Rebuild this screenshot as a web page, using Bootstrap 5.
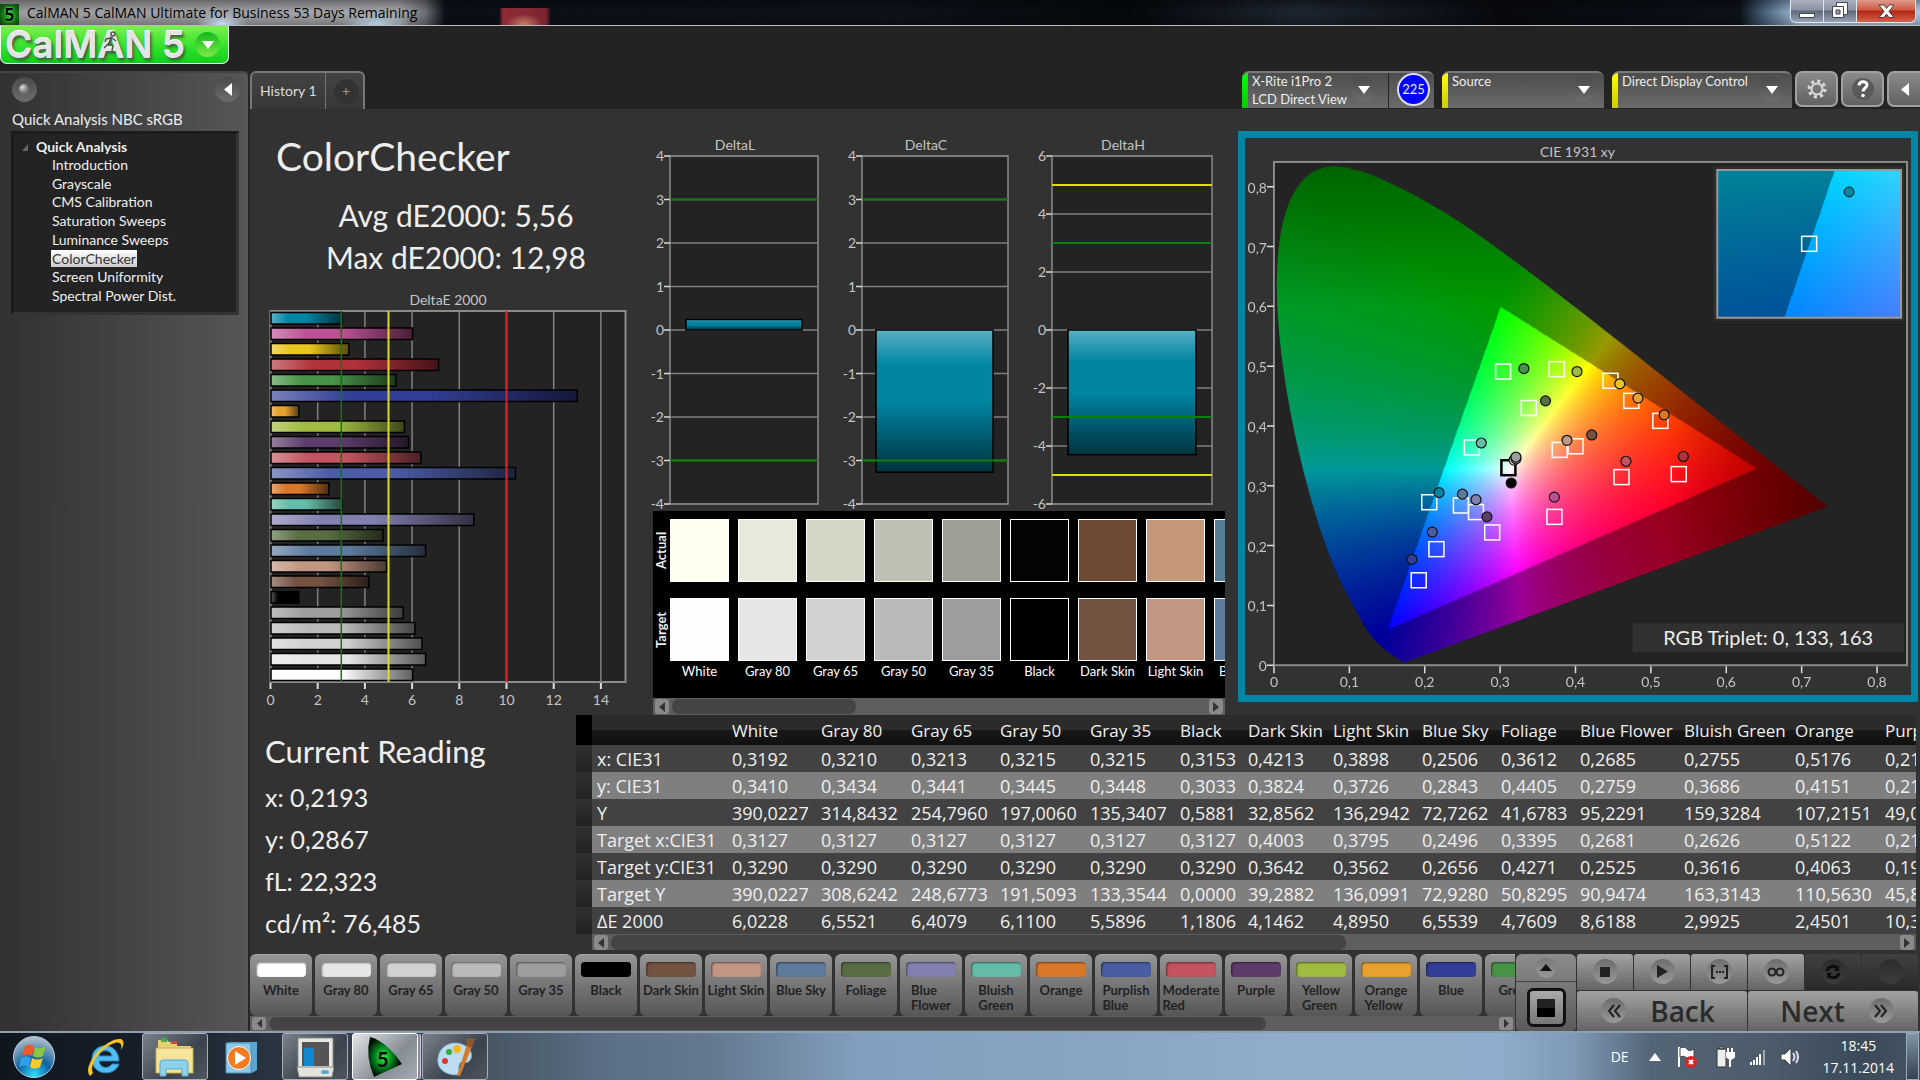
<!DOCTYPE html>
<html lang="en">
<head>
<meta charset="utf-8">
<meta name="viewport" content="width=device-width, initial-scale=1">
<title>CalMAN 5 CalMAN Ultimate for Business</title>
<link href="https://cdn.jsdelivr.net/npm/bootstrap@5.3.0/dist/css/bootstrap.min.css" rel="stylesheet">
<style>
:root{--ui:Lato,"Open Sans",sans-serif;--grid:"Open Sans","Noto Sans",sans-serif;--teal:#0085a3}
body{font-family:var(--ui);font-size:13px;color:#eee;background:#232323;line-height:18px}
button{font-family:inherit;border:0;padding:0;color:inherit}
svg{display:block}
svg text{font-family:var(--ui);font-size:14px;fill:#c4c4c4}

.titlebar{height:26px;border-bottom:1px solid #b9bcc2;background:
 radial-gradient(ellipse 26px 12px at 222px 24px,#c5dcf0 0,transparent 100%),
 radial-gradient(ellipse 34px 12px at 376px 24px,#b4cfe0 0,transparent 100%),
 radial-gradient(ellipse 18px 10px at 524px 24px,#c08060 0,transparent 100%),
 linear-gradient(90deg,transparent 499px,#8f2b38 503px,#7a2531 546px,transparent 551px) 0 8px/100% 18px no-repeat,
 linear-gradient(rgba(0,0,0,.35),transparent 45%,transparent 55%,rgba(0,0,0,.25)),
 linear-gradient(90deg,#9c9c9e 0,#a3a4a8 400px,#6c6f74 425px,#0b0f16 445px,#0d1219 900px,#05080c 1130px,#1c2530 1300px,#07090e 1500px,#0c1219 1740px,#49627c 1765px,#a9c4e0 1800px)}
.win-title{font-family:var(--grid);font-size:14px;color:#000}
.app-mark{width:19px;height:21px;background:radial-gradient(#1fae1f,#0b3d0b);color:#000;text-shadow:0 0 2px #5f5,0 0 2px #5f5;font-family:var(--grid);font-weight:700;font-size:18px;line-height:21px}
.win-ctl{height:23px;border:1px solid #dfe6ee;border-top:0;border-radius:0 0 6px 6px;overflow:hidden}
.win-ctl button{width:33px;background:linear-gradient(#a9b1bd 0,#8b95a3 45%,#5d6878 50%,#98a5b5 100%);border-right:1px solid #dfe6ee}
.win-ctl button:last-child{width:58px;border:0;background:linear-gradient(#e09a8c 0,#cf5a43 45%,#b02713 50%,#d4604a 100%)}

.brandbar{height:45px}
.brand-btn{width:229px;height:38px;background:linear-gradient(#7cf04c,#2fe02a 60%,#0fd01c);border:1px solid #e8ffe8;border-top:0;border-radius:0 0 7px 7px}
.brand-name{font-family:Inter,sans-serif;font-weight:600;font-size:37px;line-height:34px;color:#e4e4e4;text-shadow:0 -1px 0 #fff,1px 1px 1px #555,2px 3px 3px #2a7a2a}
.runner{left:101px;top:3px}
.round-btn{width:25px;height:25px;border-radius:50%;background:linear-gradient(#4a4a4a,#6d6d6d);display:flex;align-items:center;justify-content:center;flex:none}
.brand-btn .round-btn{background:linear-gradient(#12b81a,#7bea4b)}
.tab-group .round-btn{background:#333;color:#999}

.side{width:250px;flex:none;background:linear-gradient(90deg,#313131,#565656);border-top:2px solid #444;border-right:2px solid #262626;border-radius:0 6px 0 0}
.side-title{font-size:15px}
.tree{border:3px solid #1c1c1c;border-right-color:#333;border-bottom-color:#333;background:#232323;height:184px;font-size:14px;margin:3px 9px 0 11px}
.tree ul{height:149px;padding-left:29px}
.tree a{color:#f0f0f0;text-decoration:none;padding:0 1px}
.tree a.current{background:linear-gradient(#fff,#ccc);color:#333}

.tabrow{height:38px}
.tab-group{border:2px solid #777;border-bottom:0;border-radius:6px 6px 0 0;background:linear-gradient(#444,#363636)}
.tab-group button{background:none;font-size:14px;color:#ddd}
.device{border-top:2px solid #7a7a7a;border-radius:7px 7px 0 0;background:linear-gradient(#4d4d4d,#6b6b6b);overflow:hidden;margin-bottom:1px}
.device button{background:none;text-align:left}
.device-text{line-height:18px;margin-top:-1px}
.stripe{width:6px;flex:none;align-self:stretch}
.count{width:33px;height:33px;border-radius:50%;background:#00f;border:2px solid #dde;font-size:13px;line-height:29px;text-align:center}
.tool-btn{width:43px;height:36px;border:2px solid #a0a0a0;border-radius:7px;background:linear-gradient(#8a8a8a,#626262);display:flex;align-items:center;justify-content:center;flex:none;margin-left:3px}

.work{background:#323232;min-height:0}
.c-left{flex:396 1 0;min-width:0}.c-mid{flex:586 1 0;min-width:0}.c-right{flex:688 1 0;min-width:0}
.h-page{font-size:39px;line-height:56px;font-weight:400;margin:19px 0 0 26px}
.stats{margin:10px 0 12px 16px}
.stat{font-size:30px;line-height:42px}
.reads{padding:13px 0 0 15px;width:322px;flex:none}
.h-read{font-size:31px;line-height:46px;font-weight:400;margin-bottom:2px}
.reading{font-size:25px;line-height:42px}
.charts{padding-top:21px}
.cie{border:7px solid var(--teal);margin:22px 2px 0 6px}
.cie .triplet{font-size:20px;fill:#eee}

.patches{background:#000;height:204px;margin:0 7px}
.patch-row{overflow:hidden}
.vtext{writing-mode:vertical-rl;transform:rotate(180deg);text-align:center;font-weight:700;line-height:17px}
.patch{width:59px;height:63px;border:1px solid #fff;flex:none}
.patch-col{width:59px;flex:none}
.patch-name{font-size:13px;line-height:20px;color:#fff;white-space:nowrap}

.hbar{height:17px;background:#5e5e5e;padding:1px 2px}
.hbar button{width:14px;height:15px;border-radius:3px;background:#8a8a8a;display:flex;align-items:center;justify-content:center;flex:none}
.hbar .thumb{background:#444;border-radius:7px;height:15px;margin-left:3px}

.datagrid{font-family:var(--grid);font-size:18px;line-height:26px;table-layout:fixed;width:1344px;white-space:nowrap;color:#f0f0f0}
.datagrid th,.datagrid td{font-weight:400;padding:0;height:27px;overflow:hidden}
.datagrid thead th{height:30px;padding-top:2px;font-size:17px;background:linear-gradient(#2b2b2b 50%,#181818 51%,#101010)}
.datagrid tbody tr{background:#424242}
.datagrid tbody tr:nth-child(even){background:#7f7f7f}
.datagrid .gut{background:linear-gradient(#303030,#222)}
.datagrid thead .gut{background:#000}
.datagrid .rowname{padding-left:5px}

.deck{background:#323232}
.chips{height:62px;gap:3px;overflow:hidden}
.chip{width:62px;flex:none;border-radius:6px;background:linear-gradient(#959595,#565656);border-top:1px solid #a8a8a8;color:#222;font-weight:700;line-height:15px;display:flex;flex-direction:column;align-items:center}
.chip i{width:50px;height:15px;margin:7px 0 6px;border-radius:4px;box-shadow:inset 1px 1px 2px rgba(0,0,0,.5);flex:none}
.chip span{text-align:left}
.trans{width:341px;flex:none;margin-right:2px}
.trans button{background:linear-gradient(#a2a2a2,#646464);border-radius:3px 3px 0 0;display:flex;align-items:center;justify-content:center;flex:1 1 0;color:#2b2b2b}
.trans button.off{background:linear-gradient(#404040,#2a2a2a);color:#111}
.trans .round-btn{background:linear-gradient(#6d6d6d,#999)}
.trans .off .round-btn{background:linear-gradient(#2c2c2c,#3c3c3c)}
.nav-word{font-family:var(--grid);font-size:28px;font-weight:600;line-height:30px}
.mon{width:60px;flex:none;background:linear-gradient(#8c8c8c,#5a5a5a);border-radius:6px 6px 4px 4px;margin-left:1px;margin-right:1px}
.mon .top-half{height:28px;border-bottom:1px solid #444;background:none}
.mon .round-btn{width:20px;height:20px;background:linear-gradient(#777,#999)}
.mon .screen-btn{width:39px;height:39px;border:3px solid #111;border-radius:6px;background:linear-gradient(#aaa,#777);margin-top:6px}

.taskbar{height:49px;border-top:2px solid #8fa0b2;font-family:var(--grid);background:
 linear-gradient(90deg,#0f161e 0,#17202a 8%,#2c3744 15%,#46545f 25%,#5c7088 32%,#64798f 37%,#839fc0 45%,#86a3c0 55%,#91adcb 68%,#8fadcc 78%,#7f99b6 82%,#546577 86%,#4d5c6b 92%,#3b4a58 97%,#435363 100%)}
.task{width:66px;height:47px;background:none;display:flex;align-items:center;justify-content:center;flex:none}
.task.start{width:68px}
.task.open{border:1px solid #aab;border-radius:3px;background:linear-gradient(135deg,#7a828a,#3b444e 60%,#4d565f)}
.task.active{border:1px solid #fff;border-radius:3px;background:linear-gradient(135deg,#e3e5e8,#878d95 60%,#a6acb3);box-shadow:3px 0 0 -1px #889,4px 0 0 -1px #ccd}
.clock{font-size:14px;line-height:22px;text-align:center;color:#fff}
.tray{gap:12px;margin-right:12px}
.peek{width:13px;border:1px solid #9ab;background:linear-gradient(#8393a2,#33414f);margin-right:1px}
</style>
</head>
<body class="vh-100 d-flex flex-column overflow-hidden">

<header class="titlebar d-flex align-items-start flex-shrink-0">
  <span class="app-mark text-center mt-1">5</span>
  <span class="win-title ms-1 ps-1 mt-1">CalMAN 5 CalMAN Ultimate for Business 53 Days Remaining</span>
  <div class="win-ctl d-flex ms-auto me-1">
    <button aria-label="Minimize"><svg width="32" height="22"><rect x="8.500" y="13.500" width="15" height="4" fill="#fff" stroke="#445"/></svg></button>
    <button aria-label="Restore"><svg width="32" height="22"><path d="M12.500 2.500h11v12h-11z" fill="#fff" stroke="#445"/><path d="M8.500 6.500h11v11h-11z" fill="#fff" stroke="#445"/><path d="M12 10h4v4h-4z" fill="#99a" stroke="#445"/></svg></button>
    <button aria-label="Close"><svg width="58" height="22"><path d="M22 5h5l2.500 3.500L32 5h5l-5 6.500 5 6h-5l-2.500-3.500L27 17.500h-5l5-6z" fill="#fff" stroke="#444"/></svg></button>
  </div>
</header>

<div class="brandbar flex-shrink-0">
  <button class="brand-btn position-relative d-flex align-items-center justify-content-between ps-1 pe-2" aria-label="CalMAN 5 menu">
    <span class="brand-name">CalMAN 5</span>
    <svg class="runner position-absolute" width="16" height="24" viewBox="0 0 16 24" fill="none" stroke="#4a5a4a" stroke-width="1.500"><circle cx="11" cy="5" r="2"/><path d="M10 8l-3 6 4 3-1 5M7 14l-5 5M9 9l-5 1-1 3M10 9l4 3"/></svg>
    <span class="round-btn"><svg width="12" height="8"><path d="M0 0h12L6 8z" fill="#fff"/></svg></span>
  </button>
</div>

<div class="d-flex flex-grow-1 overflow-hidden">
  <aside class="side">
    <div class="d-flex justify-content-between ps-2 pe-2 pt-1 ms-1">
      <button class="round-btn" aria-label="Record"><svg width="13" height="13"><defs><radialGradient id="ball" cx=".35" cy=".35"><stop offset="0" stop-color="#ddd"/><stop offset="1" stop-color="#777"/></radialGradient></defs><circle cx="6" cy="6" r="5" fill="url(#ball)"/></svg></button>
      <button class="round-btn" aria-label="Collapse"><svg width="8" height="13"><path d="M8 0v13L0 6.500z" fill="#fff"/></svg></button>
    </div>
    <div class="side-title ms-2 ps-1 mt-2">Quick Analysis NBC sRGB</div>
    <nav class="tree ps-2">
      <div class="d-flex align-items-center pt-1 fw-bold"><svg width="6" height="7" class="me-2"><path d="M6 0v7H0z" fill="#666"/></svg>Quick Analysis</div>
      <ul class="list-unstyled mb-0 d-flex flex-column justify-content-between">
        <li><a href="#">Introduction</a></li><li><a href="#">Grayscale</a></li><li><a href="#">CMS Calibration</a></li><li><a href="#">Saturation Sweeps</a></li><li><a href="#">Luminance Sweeps</a></li><li><a href="#" class="current">ColorChecker</a></li><li><a href="#">Screen Uniformity</a></li><li><a href="#">Spectral Power Dist.</a></li>
      </ul>
    </nav>
  </aside>

  <main class="flex-grow-1 d-flex flex-column overflow-hidden">
    <div class="tabrow d-flex flex-shrink-0">
      <div class="tab-group d-flex">
        <button class="ps-2 pe-2">History 1</button>
        <button class="border-start border-secondary px-1 ps-2" aria-label="Add history"><span class="round-btn">+</span></button>
      </div>
      <div class="d-flex ms-auto">
        <div class="device d-flex me-2" id="devMeter"></div>
        <div class="device d-flex me-2" id="devSource"></div>
        <div class="device d-flex" id="devDisplay"></div>
        <button class="tool-btn" aria-label="Settings"><svg width="22" height="22" viewBox="-11 -11 22 22"><g fill="none" stroke="#ddd"><circle r="5.500" stroke-width="2"/><circle r="8" stroke-width="3" stroke-dasharray="3 3.280"/></g></svg></button>
        <button class="tool-btn" aria-label="Help"><svg width="22" height="24"><circle cx="11" cy="12" r="11" fill="#5a5a5a"/><path d="M7 8.500c0-5 8-5 8-.5 0 3-4 3-4 6.500" fill="none" stroke="#fff" stroke-width="3"/><circle cx="11" cy="18.500" r="1.800" fill="#fff"/></svg></button>
        <button class="tool-btn border-end-0 rounded-end-0" style="width:33px" aria-label="Collapse toolbar"><svg width="8" height="13"><path d="M8 0v13L0 6.500z" fill="#fff"/></svg></button>
      </div>
    </div>

    <div class="work flex-grow-1 d-flex flex-column overflow-hidden">
      <div class="d-flex">
        <section class="c-left">
          <h1 class="h-page">ColorChecker</h1>
          <div class="stats text-center">
            <div class="stat">Avg dE2000: 5,56</div>
            <div class="stat">Max dE2000: 12,98</div>
          </div>
          <svg id="deChart" viewBox="0 0 396 420" class="w-100"></svg>
        </section>
        <section class="c-mid">
          <div class="charts d-flex" id="deltas"></div>
          <div class="patches d-flex flex-column">
            <div class="patch-row d-flex flex-grow-1 pt-2">
              <div class="d-flex flex-column flex-shrink-0">
                <div class="vtext" style="height:63px">Actual</div>
                <div class="vtext mt-3" style="height:63px">Target</div>
              </div>
              <div class="d-flex" id="patchCols" style="gap:9px"></div>
            </div>
            <div class="hbar d-flex flex-shrink-0"><button aria-label="Left"><svg width="6" height="10"><path d="M6 0v10L0 5z" fill="#333"/></svg></button><div class="thumb" style="width:184px"></div><button class="ms-auto" aria-label="Right"><svg width="6" height="10"><path d="M0 0v10L6 5z" fill="#333"/></svg></button></div>
          </div>
        </section>
        <section class="c-right">
          <div class="cie">
            <svg id="cie" viewBox="0 0 667 558" class="w-100"></svg>
          </div>
        </section>
      </div>

      <div class="d-flex flex-grow-1">
        <section class="reads">
          <h2 class="h-read">Current Reading</h2>
          <div class="reading">x: 0,2193</div>
          <div class="reading">y: 0,2867</div>
          <div class="reading">fL: 22,323</div>
          <div class="reading">cd/m²: 76,485</div>
        </section>
        <section class="flex-grow-1 overflow-hidden me-1 ms-1 ps-0">
          <table class="datagrid" id="grid"></table>
          <div class="hbar d-flex ms-3"><button aria-label="Left"><svg width="6" height="10"><path d="M6 0v10L0 5z" fill="#333"/></svg></button><div class="thumb" style="width:735px"></div><button class="ms-auto" aria-label="Right"><svg width="6" height="10"><path d="M0 0v10L6 5z" fill="#333"/></svg></button></div>
        </section>
      </div>
    </div>

    <footer class="deck d-flex flex-shrink-0 pt-1">
      <div class="flex-grow-1 overflow-hidden">
        <div class="chips d-flex" id="chips"></div>
        <div class="hbar d-flex" style="height:15px"><button style="height:13px" aria-label="Left"><svg width="5" height="9"><path d="M5 0v9L0 4.500z" fill="#333"/></svg></button><div class="thumb" style="width:997px;height:13px"></div><button class="ms-auto" style="height:13px" aria-label="Right"><svg width="5" height="9"><path d="M0 0v9L5 4.500z" fill="#333"/></svg></button></div>
      </div>
      <div class="mon d-flex flex-column align-items-center">
        <button class="top-half w-100 d-flex justify-content-center align-items-center" aria-label="Expand"><span class="round-btn"><svg width="12" height="7"><path d="M0 7h12L6 0z" fill="#111"/></svg></span></button>
        <button class="screen-btn d-flex align-items-center justify-content-center" aria-label="Pattern window"><svg width="18" height="18"><path d="M0 0h18v18H0z"/><path d="M0 0h18v9H0z" fill="#222"/></svg></button>
      </div>
      <div class="trans d-flex flex-column" style="gap:1px">
        <div class="d-flex flex-grow-1" style="gap:1px">
          <button aria-label="Stop"><span class="round-btn"><svg width="10" height="10"><path d="M0 0h10v10H0z" fill="#222"/></svg></span></button>
          <button aria-label="Play"><span class="round-btn"><svg width="11" height="13"><path d="M0 0l11 6.500L0 13z" fill="#222"/></svg></span></button>
          <button aria-label="Range"><span class="round-btn"><svg width="17" height="14" fill="none" stroke="#222" stroke-width="2"><path d="M4 1H1v12h3M13 1h3v12h-3"/><path d="M5 7h8" stroke-dasharray="2 1"/></svg></span></button>
          <button aria-label="Loop"><span class="round-btn"><svg width="18" height="10" fill="none" stroke="#222" stroke-width="2"><circle cx="5" cy="5" r="3.500"/><circle cx="13" cy="5" r="3.500"/></svg></span></button>
          <button class="off" aria-label="Refresh"><span class="round-btn"><svg width="16" height="16" fill="none" stroke="#0c0c0c" stroke-width="3"><path d="M2 7a6 6 0 0 1 10-3M14 9a6 6 0 0 1-10 3"/><path d="M14 1v6H9zM2 15V9h5z" fill="#0c0c0c" stroke="none"/></svg></span></button>
          <button class="off" aria-label="Blank"><span class="round-btn"></span></button>
        </div>
        <div class="d-flex flex-grow-1" style="gap:1px">
          <button><span class="round-btn me-4"><svg width="14" height="14" fill="none" stroke="#222" stroke-width="2"><path d="M7 1L2 7l5 6M13 1L8 7l5 6"/></svg></span><span class="nav-word me-2">Back</span></button>
          <button><span class="nav-word ms-2 me-4">Next</span><span class="round-btn"><svg width="14" height="14" fill="none" stroke="#222" stroke-width="2"><path d="M1 1l5 6-5 6M7 1l5 6-5 6"/></svg></span></button>
        </div>
      </div>
    </footer>
  </main>
</div>

<div class="taskbar d-flex align-items-center flex-shrink-0">
  <button class="task start" aria-label="Start"><svg width="44" height="44" viewBox="0 0 44 44"><defs><radialGradient id="orb" cx=".5" cy=".95" r=".9"><stop offset="0" stop-color="#2fe0ff"/><stop offset=".45" stop-color="#0f62a0"/><stop offset="1" stop-color="#a9bccb"/></radialGradient></defs><circle cx="22" cy="22" r="20.500" fill="url(#orb)" stroke="#bcd"/><path d="M13 11q4-3 9 0l-2 10q-4-3-10 0z" fill="#f0592a"/><path d="M23 12q5 3 11-1l-3 10q-5 3-10 0z" fill="#8cc63f"/><path d="M9 23q5-3 10 0l-2 9q-4-3-10 0z" fill="#2f9fe8"/><path d="M20 23q5 3 11 0l-3 9q-5 3-10 0z" fill="#fdc928"/></svg></button>
  <button class="task ms-1" aria-label="Internet Explorer"><svg width="42" height="42" viewBox="0 0 42 42"><path d="M35 25H15c1 8 10 8 13 3h7C31 41 8 40 8 23S34 4 35 25zM15 20h13c-1-7-12-7-13 0z" fill="#52bdf2" stroke="#2b86c5"/><path d="M6 40C-3 30 22 1 37 3c5 2 1 10 0 11 2-8-3-9-9-6C15 14 5 29 9 37z" fill="#f7c325"/></svg></button>
  <button class="task open ms-1" aria-label="Explorer"><svg width="42" height="42" viewBox="0 0 42 42"><path d="M4 4h9l2 2h8v4h14v26H4z" fill="#e9cf74"/><path d="M7 2h6v4H7z" fill="#4a4"/><path d="M17 5h6v3h-6z" fill="#c44"/><path d="M2 12h37v25H2z" fill="#f6e39a" stroke="#cdae4c"/><path d="M6 40V27q0-3 3-3h22q3 0 3 3v13h-6v-7H12v7z" fill="#8fd0ea" stroke="#5aa7cc"/></svg></button>
  <button class="task" aria-label="Media Player"><svg width="36" height="40" viewBox="0 0 36 40"><path d="M6 5h28v28l-5 3H3V8z" fill="#5ba7d2"/><path d="M3 6h25v30H3z" fill="#8cc9ea" stroke="#4b8fb8"/><circle cx="16" cy="21" r="11.500" fill="#f27b21" stroke="#fff"/><path d="M12 14l11 7-11 7z" fill="#fff"/></svg></button>
  <button class="task open ms-2" aria-label="Monitor tool"><svg width="38" height="44" viewBox="0 0 38 44"><path d="M2 3h35v30H2z" fill="#e8e8e2" stroke="#888"/><path d="M1 32h37l-2 10H3z" fill="#e4e4de" stroke="#888"/><path d="M6 7h27v24H6z" fill="#555"/><path d="M8 13h10v18H8z" fill="#1488cf"/><ellipse cx="29" cy="37" rx="4" ry="2" fill="#5ba7d2"/></svg></button>
  <button class="task active ms-1" aria-label="CalMAN"><svg width="42" height="42" viewBox="0 0 42 42"><defs><radialGradient id="cm" cx=".45" cy=".5"><stop offset="0" stop-color="#3f3"/><stop offset=".5" stop-color="#082"/><stop offset="1" stop-color="#010"/></radialGradient></defs><path d="M6 1q16 4 32 27L10 41Q1 20 6 1z" fill="url(#cm)"/><text x="13" y="31" style="font-size:20px;font-weight:700;fill:#000">5</text></svg></button>
  <button class="task open ms-1" aria-label="Paint"><svg width="42" height="42" viewBox="0 0 42 42"><path d="M4 22C6 6 26 2 36 14c4 8-1 14-6 12-6-2-6 8-4 12-8 3-24-2-22-16z" fill="#bcdcf0" stroke="#86b3d3"/><circle cx="11" cy="25" r="3" fill="#d33"/><circle cx="15" cy="16" r="3" fill="#3a4"/><circle cx="23" cy="13" r="4" fill="#f6b81f"/><path d="M34 5l5 3-13 32-3 0z" fill="#d07a2c"/><path d="M33 2l8 1-4 9-5-3z" fill="#8a5a2c"/></svg></button>
  <div class="tray ms-auto d-flex align-items-center">
    <span class="clock me-1">DE</span>
    <svg width="12" height="8" class="me-1 ms-1"><path d="M6 0l6 8H0z" fill="#fff"/></svg>
    <svg width="22" height="24" class="me-1"><path d="M2 2v20" stroke="#fff" stroke-width="2"/><path d="M3 3q5-2 7 1t7 0v9q-4 3-7 0t-7-1z" fill="#fff" stroke="#444"/><circle cx="14" cy="17" r="6" fill="#d22"/><path d="M12 15l4 4m0-4l-4 4" stroke="#fff" stroke-width="2"/></svg>
    <svg width="22" height="24"><path d="M2 4h9v18H2zM4 2h5v2H4z" fill="#eee" stroke="#333"/><path d="M13 3v4m4-4v4M12 8h7v4l-3 2h-1l-3-2zM15 13v9" stroke="#fff" stroke-width="2" fill="#fff"/></svg>
    <svg width="18" height="18" fill="#fff"><path d="M1 14h2v3H1zM4 12h2v5H4zM7 9h2v8H7zM10 6h2v11h-2z"/><path d="M14 2h2v15h-2z" fill="#9aa"/></svg>
    <svg width="24" height="22" class="me-2"><path d="M2 8h4l6-6v18l-6-6H2z" fill="#fff" stroke="#444"/><path d="M14 7q3 4 0 8M17 5q4 6 0 12" stroke="#dde" fill="none" stroke-width="2"/></svg>
    <div class="clock">18:45<br>17.11.2014</div>
  </div>
  <button class="peek h-100" aria-label="Show desktop"></button>
</div>

<script src="https://cdn.jsdelivr.net/npm/bootstrap@5.3.0/dist/js/bootstrap.bundle.min.js"></script>
<script>
const patches=[['White','#fefefe','#feffef'],['Gray 80','#e6e6e6','#e8e9da'],['Gray 65','#d1d1d1','#d5d6c6'],['Gray 50','#bababa','#bfc0b3'],['Gray 35','#9e9e9e','#9f9f95'],['Black','#000','#040404'],['Dark Skin','#735242','#6c4b32'],['Light Skin','#c29682','#c39777'],['Blue Sky','#5e7a9c','#577d95'],['Foliage','#596c43'],['Blue Flower','#8280b0'],['Bluish Green','#64bda8'],['Orange','#d97829'],['Purplish Blue','#4a5ca4'],['Moderate Red','#c3545f'],['Purple','#5d3c6b'],['Yellow Green','#9fbc40'],['Orange Yellow','#e6a12e'],['Blue','#333e96'],['Green','#489447']];
const byId=i=>document.getElementById(i);

/* device tabs */
const drop='<span class="round-btn"><svg width="12" height="8"><path d="M0 0h12L6 8z" fill="#fff"/></svg></span>';
function device(id,w,color,text,extra){
  const el=byId(id);el.style.width=w+'px';
  el.innerHTML=`<span class="stripe" style="background:${color}"></span><button class="d-flex flex-grow-1 align-items-start ps-1"><span class="device-text flex-grow-1 text-nowrap">${text}</span><span class="mt-1 me-2">${drop}</span></button>${extra||''}`;
}
device('devMeter',192,'linear-gradient(#0f0,#0c0)','X-Rite i1Pro 2<br>LCD Direct View','<span class="border-start border-dark ps-2 ms-1 pe-1"><span class="count d-block">225</span></span>');
device('devSource',162,'linear-gradient(#ff0,#cc0)','Source');
device('devDisplay',180,'linear-gradient(#ff0,#cc0)','Direct Display Control');

/* swatch strip and pattern buttons */
byId('patchCols').innerHTML=patches.slice(0,9).map(p=>`<div class="patch-col"><div class="patch" style="background:${p[2]}"></div><div class="patch mt-3" style="background:${p[1]}"></div><div class="patch-name d-flex justify-content-center">${p[0]}</div></div>`).join('');
byId('chips').innerHTML=patches.map(p=>`<button class="chip"><i style="background:${p[1]}"></i><span>${/Skin|Sky|Gray/.test(p[0])?'<span class="text-nowrap">'+p[0]+'</span>':p[0].replace(' ','<br>')}</span></button>`).join('');

/* measurement table */
const cols=[16,140,89,90,89,90,90,68,85,89,79,79,104,111,90,50];
const rows=[
['x: CIE31','0,3192','0,3210','0,3213','0,3215','0,3215','0,3153','0,4213','0,3898','0,2506','0,3612','0,2685','0,2755','0,5176','0,21'],
['y: CIE31','0,3410','0,3434','0,3441','0,3445','0,3448','0,3033','0,3824','0,3726','0,2843','0,4405','0,2759','0,3686','0,4151','0,21'],
['Y','390,0227','314,8432','254,7960','197,0060','135,3407','0,5881','32,8562','136,2942','72,7262','41,6783','95,2291','159,3284','107,2151','49,0'],
['Target x:CIE31','0,3127','0,3127','0,3127','0,3127','0,3127','0,3127','0,4003','0,3795','0,2496','0,3395','0,2681','0,2626','0,5122','0,21'],
['Target y:CIE31','0,3290','0,3290','0,3290','0,3290','0,3290','0,3290','0,3642','0,3562','0,2656','0,4271','0,2525','0,3616','0,4063','0,19'],
['Target Y','390,0227','308,6242','248,6773','191,5093','133,3544','0,0000','39,2882','136,0991','72,9280','50,8295','90,9474','163,3143','110,5630','45,8'],
['ΔE 2000','6,0228','6,5521','6,4079','6,1100','5,5896','1,1806','4,1462','4,8950','6,5539','4,7609','8,6188','2,9925','2,4501','10,3']];
byId('grid').innerHTML='<colgroup>'+cols.map(w=>`<col style="width:${w}px">`).join('')+'</colgroup><thead><tr><th class="gut"></th><th></th>'+patches.slice(0,14).map(p=>`<th scope="col">${p[0]}</th>`).join('')+'</tr></thead><tbody>'+rows.map(r=>'<tr><td class="gut"></td>'+r.map((c,i)=>i?`<td>${c}</td>`:`<th scope="row" class="rowname">${c}</th>`).join('')+'</tr>').join('')+'</tbody>';

/* Delta E bar chart */
const shade=(id,v)=>`<linearGradient id="${id}" x2="${v?0:1}" y2="${v?1:0}"><stop offset="0" stop-color="#fff" stop-opacity=".35"/><stop offset=".25" stop-color="#fff" stop-opacity="0"/><stop offset=".5" stop-color="#000" stop-opacity="0"/><stop offset="1" stop-color="#000" stop-opacity=".62"/></linearGradient>`;
const bars=[['#0085a3',3],['#bb5294',6],['#e9c51f',3.3],['#b0323c',7.1],['#489447',5.3],['#333e96',12.98],['#e6a12e',1.18],['#9fbc40',5.65],['#5d3c6b',5.83],['#c3545f',6.35],['#4a5ca4',10.36],['#d97829',2.45],['#64bda8',3],['#8280b0',8.6],['#596c43',4.75],['#5e7a9c',6.55],['#c29682',4.9],['#735242',4.15],['#000',1.18],['#9e9e9e',5.6],['#bababa',6.1],['#d1d1d1',6.4],['#e6e6e6',6.55],['#fff',6]];
(()=>{const X=v=>20.5+v*23.6;let s='<defs>'+shade('sh')+'</defs><text x="198" y="15" text-anchor="middle">DeltaE 2000</text><rect x="20.500" y="21" width="355" height="371" fill="#232323" stroke="#8a8a8a" stroke-width="2"/>';
for(let v=0;v<=14;v+=2)s+=`<path d="M${X(v)} 21V392" stroke="#808080" stroke-width="1.500"/><path d="M${X(v)} 393v6" stroke="#ddd" stroke-width="2"/><text x="${X(v)}" y="415" text-anchor="middle">${v}</text>`;
bars.forEach((b,i)=>{const a=`x="21" y="${(22.5+i*15.5).toFixed(1)}" width="${b[1]*23.6}" height="11.500"`;s+=`<rect ${a} fill="${b[0]}"/><rect ${a} fill="url(#sh)" stroke="#000" stroke-width="1.500"/>`});
s+=`<path d="M${X(3)} 21V392" stroke="#0a7a0a" stroke-width="1.500"/><path d="M${X(5)} 21V392" stroke="#dcd82a" stroke-width="2"/><path d="M${X(10)} 21V392" stroke="#e02020" stroke-width="2"/>`;
byId('deChart').innerHTML=s})();

/* Delta L / C / H */
function delta(name,W,x0,x1,b0,b1,max,step,val,yellow){
 const Y=v=>26+(max-v)*348/(2*max);let s='<defs>'+shade('v'+name,1)+`</defs><text x="${(x0+x1)/2-9}" y="20" text-anchor="middle">${name}</text><rect x="${x0}" y="26" width="${x1-x0}" height="348" fill="#232323" stroke="#8a8a8a" stroke-width="1.500"/>`;
 for(let v=max;v>=-max;v-=step)s+=`<path d="M${x0} ${Y(v)}H${x1}" stroke="#808080" stroke-width="1.500"/><path d="M${x0-6} ${Y(v)}h6" stroke="#ddd" stroke-width="1.500"/><text x="${x0-6}" y="${Y(v)+5}" text-anchor="end">${v}</text>`;
 const a=`x="${b0}" y="${Y(Math.max(val,0))}" width="${b1-b0}" height="${Y(Math.min(val,0))-Y(Math.max(val,0))}"`;
 s+=`<rect ${a} fill="#0085a3"/><rect ${a} fill="url(#v${name})" stroke="#000" stroke-width="1.500"/>`;
 [3,-3].forEach(v=>s+=`<path d="M${x0} ${Y(v)}H${x1}" stroke="#0a7f0a" stroke-width="2"/>`);
 if(yellow)[5,-5].forEach(v=>s+=`<path d="M${x0} ${Y(v)}H${x1}" stroke="#e0dc10" stroke-width="2"/>`);
 return `<svg viewBox="0 0 ${W} 381" style="flex:${W} 1 0;min-width:0">${s}</svg>`}
byId('deltas').innerHTML=delta('DeltaL',192,24,172,40,156,4,1,.24)+delta('DeltaC',192,24,170,38,155,4,1,-3.27)+delta('DeltaH',202,22,182,38,166,6,2,-4.3,true);

/* CIE 1931 diagram */
const locus=[[.1741,.005],[.1714,.0051],[.1644,.0109],[.1566,.0177],[.144,.0297],[.1241,.0578],[.0913,.1327],[.0687,.2007],[.0454,.295],[.0235,.4127],[.0082,.5384],[.0039,.6548],[.0139,.7502],[.0389,.812],[.0743,.8338],[.1142,.8262],[.1547,.8059],[.1929,.7816],[.2296,.7543],[.2658,.7243],[.3016,.6923],[.3373,.6589],[.3731,.6245],[.4087,.5896],[.4441,.5547],[.4788,.5202],[.5125,.4866],[.5448,.4544],[.5752,.4242],[.6029,.3965],[.627,.3725],[.6482,.3514],[.6658,.334],[.6915,.3083],[.714,.2859],[.7347,.2653]];
const R=[.64,.33],G=[.3,.6],B=[.15,.06];
const side=(p,a,b)=>(b[0]-a[0])*(p[1]-a[1])-(b[1]-a[1])*(p[0]-a[0]);
function colorAt(x,y){
 const X=x/y,Z=(1-x-y)/y;
 let c=[3.2406*X-1.5372-.4986*Z,-.9689*X+1.8758+.0415*Z,.0557*X-.204+1.057*Z].map(v=>Math.max(v,0));
 const m=Math.max(...c);const p=[x,y];
 const inside=side(p,R,G)>=0&&side(p,G,B)>=0&&side(p,B,R)>=0;
 let f=(inside?1:.6)*(1-Math.max(0,x-.52)*2.2)*(1-Math.max(0,y-.6)*1.5);
 return c.map(v=>255*f*v/m);
}
function paint(cv,x0,y1,sx,sy){
 const g=cv.getContext('2d'),im=g.createImageData(cv.width,cv.height);let k=0;
 for(let j=0;j<cv.height;j++)for(let i=0;i<cv.width;i++){const c=colorAt(x0+i/sx,Math.max(.002,y1-j/sy));im.data[k++]=c[0];im.data[k++]=c[1];im.data[k++]=c[2];im.data[k++]=255}
 g.putImageData(im,0,0);
}
function smooth(pts){
 let d='M'+pts[0];
 for(let i=0;i<pts.length-1;i++){const a=pts[Math.max(i-1,0)],b=pts[i],c=pts[i+1],e=pts[Math.min(i+2,pts.length-1)];
  d+=`C${b[0]+(c[0]-a[0])/6},${b[1]+(c[1]-a[1])/6} ${c[0]-(e[0]-b[0])/6},${c[1]-(e[1]-b[1])/6} ${c}`}
 return d+'Z';
}
(()=>{
 const X=x=>29+x*755,Y=y=>528-y*599;
 let s='<text x="333" y="19" text-anchor="middle">CIE 1931 xy</text><rect x="29" y="24" width="634" height="504" fill="#232323" stroke="#8a8a8a" stroke-width="2"/>';
 s+=`<clipPath id="shoe"><path d="${smooth(locus.map(p=>[X(p[0]),Y(p[1])]))}"/></clipPath><g clip-path="url(#shoe)"><foreignObject x="29" y="24" width="634" height="504"><canvas id="cv" width="634" height="504" style="display:block"></canvas></foreignObject></g>`;
 for(let i=0;i<=8;i++){const t=i?'0,'+i:'0';s+=`<path d="M${X(i/10)} 529v7M22 ${Y(i/10)}h7" stroke="#ddd" stroke-width="1.500"/><text x="${X(i/10)}" y="550" text-anchor="middle">${t}</text><text x="22" y="${Y(i/10)+6}" text-anchor="end">${t}</text>`}
 [[.304,.491],[.375,.495],[.4465,.4755],[.474,.442],[.5125,.4085],[.338,.43],[.2625,.364],[.4,.366],[.379,.36],[.461,.3145],[.537,.3195],[.372,.248],[.248,.267],[.268,.256],[.206,.2725],[.2895,.222],[.2155,.194],[.192,.142]].forEach(p=>s+=`<rect x="${X(p[0])-7.5}" y="${Y(p[1])-7.5}" width="15" height="15" fill="none" stroke="#fff" stroke-width="1.500"/>`);
 s+=`<rect x="${X(.311)-7}" y="${Y(.331)-7}" width="14" height="15" fill="none" stroke="#000" stroke-width="2.500"/>`;
 [[.3315,.496,'#489447'],[.402,.491,'#9fbc40'],[.4587,.4705,'#e9c51f'],[.4828,.4466,'#e6a12e'],[.5176,.4187,'#d97829'],[.3602,.442,'#596c43'],[.275,.3715,'#64bda8'],[.4215,.385,'#735242'],[.3887,.376,'#c29682'],[.467,.341,'#c3545f'],[.543,.349,'#b0323c'],[.3185,.343,'#e6e6e6'],[.321,.345,'#bababa'],[.321,.348,'#9e9e9e'],[.3147,.3046,'#000'],[.25,.286,'#5e7a9c'],[.268,.2767,'#8280b0'],[.219,.2885,'#0085a3'],[.2825,.248,'#5d3c6b'],[.3719,.281,'#bb5294'],[.21,.2225,'#4a5ca4'],[.183,.177,'#333e96']].forEach(p=>s+=`<circle cx="${X(p[0])}" cy="${Y(p[1])}" r="5" fill="${p[2]}" stroke="#111" stroke-width="1.200"/>`);
 s+='<rect x="469" y="28" width="191" height="155" fill="#2e2e2e"/><foreignObject x="473" y="32" width="184" height="148"><canvas id="cv2" width="184" height="148" style="display:block"></canvas></foreignObject><rect x="473" y="32" width="184" height="148" fill="none" stroke="#999" stroke-width="2"/><rect x="557.500" y="98.500" width="15" height="15" fill="none" stroke="#fff" stroke-width="1.500"/><circle cx="605" cy="54" r="5" fill="#0085a3" stroke="#111"/>';
 s+='<rect x="388" y="486" width="272" height="29" fill="#313131"/><text x="524" y="508" text-anchor="middle" class="triplet">RGB Triplet: 0, 133, 163</text>';
 byId('cie').innerHTML=s;
 paint(byId('cv'),0,504/599,755,599);
 paint(byId('cv2'),.2101-92/3040,.2765+73/2470,3040,2470);
})();
</script>
</body>
</html>
